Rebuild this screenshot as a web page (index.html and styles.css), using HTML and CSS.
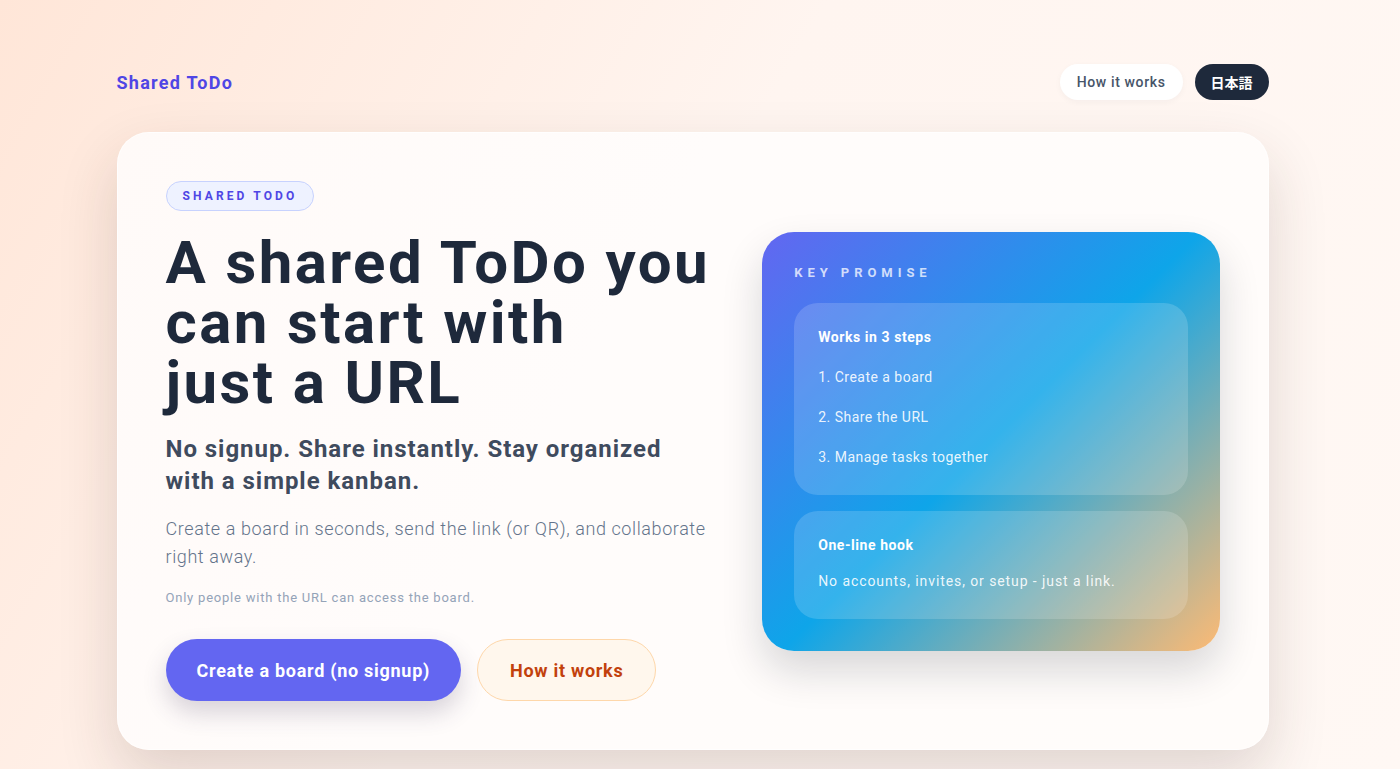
FILE: index.html
```html
<!DOCTYPE html>
<html lang="en">
<head>
    <meta charset="UTF-8">
    <meta name="viewport" content="width=device-width, initial-scale=1.0">
    <title>Shared ToDo</title>
    <link rel="stylesheet" href="styles.css">
</head>
<body>
    <div class="page">
        <header class="site-header">
            <a class="brand" href="#">Shared ToDo</a>
            <nav class="header-nav">
                <a class="nav-link" href="#how">How it works</a>
                <button class="lang-btn" type="button">日本語</button>
            </nav>
        </header>

        <main>
            <section class="hero-card">
                <div class="hero-copy">
                    <span class="eyebrow">SHARED TODO</span>
                    <h1>A shared ToDo you<br> can start with<br> just a URL</h1>
                    <p class="lead">No signup. Share instantly. Stay organized with a simple kanban.</p>
                    <p class="desc">Create a board in seconds, send the link (or QR), and collaborate right away.</p>
                    <p class="note">Only people with the URL can access the board.</p>
                    <div class="hero-actions">
                        <a class="btn btn-primary" href="#">Create a board (no signup)</a>
                        <a class="btn btn-secondary" href="#how">How it works</a>
                    </div>
                </div>

                <aside class="promise">
                    <p class="promise-label">KEY PROMISE</p>
                    <div class="promise-box">
                        <p class="promise-title">Works in 3 steps</p>
                        <ol class="promise-steps">
                            <li>1. Create a board</li>
                            <li>2. Share the URL</li>
                            <li>3. Manage tasks together</li>
                        </ol>
                    </div>
                    <div class="promise-box">
                        <p class="promise-title">One-line hook</p>
                        <p class="promise-text">No accounts, invites, or setup - just a link.</p>
                    </div>
                </aside>
            </section>

            <section class="section" id="how">
                <h2>How it works</h2>
                <div class="step-grid">
                    <div class="step-card">
                        <span class="step-num">1</span>
                        <h3>Create a board</h3>
                        <p>Press the button and a new board is ready. No account, no email.</p>
                    </div>
                    <div class="step-card">
                        <span class="step-num">2</span>
                        <h3>Share the URL</h3>
                        <p>Copy the link or show the QR code to the people you work with.</p>
                    </div>
                    <div class="step-card">
                        <span class="step-num">3</span>
                        <h3>Manage tasks together</h3>
                        <p>Add cards, move them between columns and see changes right away.</p>
                    </div>
                </div>
            </section>

            <section class="section">
                <h2>Why Shared ToDo</h2>
                <div class="step-grid">
                    <div class="step-card">
                        <h3>No signup</h3>
                        <p>Start in seconds. The URL is the key to your board.</p>
                    </div>
                    <div class="step-card">
                        <h3>Simple kanban</h3>
                        <p>Todo, Doing and Done. Nothing more than you need.</p>
                    </div>
                    <div class="step-card">
                        <h3>Works anywhere</h3>
                        <p>Open the board on a phone, a tablet or a laptop.</p>
                    </div>
                </div>
            </section>

            <section class="section">
                <h2>FAQ</h2>
                <div class="faq">
                    <div class="faq-item">
                        <h3>Who can see my board?</h3>
                        <p>Only people with the URL can access the board.</p>
                    </div>
                    <div class="faq-item">
                        <h3>Do I need an account?</h3>
                        <p>No. Create a board and share the link.</p>
                    </div>
                    <div class="faq-item">
                        <h3>Is it free?</h3>
                        <p>Yes, Shared ToDo is free to use.</p>
                    </div>
                </div>
            </section>
        </main>

        <footer class="site-footer">
            <p>&copy; 2024 Shared ToDo</p>
        </footer>
    </div>
</body>
</html>
```

FILE: styles.css
```css
* {
    box-sizing: border-box;
}

body {
    margin: 0;
    padding-right: 15px;
    font-family: 'Roboto', 'Noto Sans CJK JP', sans-serif;
    letter-spacing: 0.03em;
    color: #1e293b;
    background: linear-gradient(120deg, #ffe6d8 0%, #fff5f0 45%, #fff8f4 100%);
    background-attachment: fixed;
}

a {
    text-decoration: none;
}

p {
    margin: 0;
}

.page {
    max-width: 1152px;
    margin: 0 auto;
    padding: 64px 0 80px;
}

.site-header {
    display: flex;
    justify-content: space-between;
    align-items: center;
    height: 36px;
    margin-bottom: 32px;
}

.brand {
    color: #4f46e5;
    font-size: 18px;
    font-weight: 700;
    letter-spacing: 0.07em;
}

.header-nav {
    display: flex;
    gap: 12px;
}

.nav-link,
.lang-btn {
    display: inline-flex;
    align-items: center;
    height: 36px;
    padding: 0 17px;
    border-radius: 999px;
    font-family: inherit;
    font-size: 14px;
    font-weight: 500;
}

.nav-link {
    background: #fff;
    color: #475569;
    letter-spacing: 0.045em;
    box-shadow: 0 2px 6px rgba(15, 23, 42, 0.04);
}

.lang-btn {
    padding: 0 16px;
    background: #1e293b;
    color: #fff;
    border: none;
    font-weight: 700;
    letter-spacing: 0;
}

.hero-card {
    display: grid;
    grid-template-columns: 1.2fr 1fr;
    gap: 48px;
    align-items: center;
    padding: 48px;
    border: 1px solid rgba(255, 255, 255, 0.7);
    border-radius: 32px;
    background: linear-gradient(120deg, #fffaf8 0%, #fffcfb 40%, #fffcfa 100%);
    box-shadow: 0 26px 60px rgba(60, 40, 30, 0.16);
}

.eyebrow {
    display: inline-block;
    height: 30px;
    line-height: 28px;
    padding: 0 16px;
    border: 1px solid #c7d2fe;
    border-radius: 999px;
    background: #eef2ff;
    color: #4f46e5;
    font-size: 12px;
    font-weight: 700;
    letter-spacing: 0.26em;
}

h1 {
    margin: 22px 0 20px;
    font-size: 60px;
    line-height: 60px;
    font-weight: 700;
    letter-spacing: 0.04em;
    color: #1e293b;
}

.lead {
    max-width: 520px;
    font-size: 24px;
    line-height: 32px;
    font-weight: 700;
    letter-spacing: 0.04em;
    color: #3f4b5e;
}

.desc {
    margin-top: 18px;
    font-size: 18px;
    line-height: 28px;
    font-weight: 300;
    letter-spacing: 0.033em;
    color: #64748b;
}

.note {
    margin-top: 17px;
    font-size: 13px;
    line-height: 20px;
    letter-spacing: 0.06em;
    color: #94a3b8;
}

.hero-actions {
    display: flex;
    gap: 16px;
    margin-top: 31px;
}

.btn {
    display: inline-flex;
    align-items: center;
    height: 62px;
    padding: 0 31px;
    border-radius: 999px;
    font-size: 18px;
    font-weight: 700;
    letter-spacing: 0.04em;
}

.btn-primary {
    background: #6366f1;
    color: #fff;
    box-shadow: 0 12px 24px rgba(60, 50, 90, 0.2);
}

.btn-secondary {
    padding: 0 32px;
    background: #fff7ed;
    color: #c2410c;
    border: 1px solid #fed7aa;
}

.promise {
    padding: 31px 32px 32px;
    border-radius: 32px;
    color: #fff;
    background: linear-gradient(135deg, #6366f1 0%, #0ea5e9 50%, #fdba74 100%);
    box-shadow: 0 20px 40px rgba(15, 23, 42, 0.16);
}

.promise-label {
    font-size: 13px;
    line-height: 20px;
    font-weight: 700;
    letter-spacing: 0.38em;
    color: rgba(255, 255, 255, 0.75);
    margin-bottom: 20px;
}

.promise-box {
    padding: 22px 24px 26px;
    border-radius: 24px;
    background: rgba(255, 255, 255, 0.16);
}

.promise-box + .promise-box {
    margin-top: 16px;
}

.promise-title {
    font-size: 14px;
    line-height: 24px;
    font-weight: 700;
    letter-spacing: 0.04em;
}

.promise-steps {
    list-style: none;
    margin: 0;
    padding: 0;
}

.promise-steps li,
.promise-text {
    margin-top: 16px;
    font-size: 14px;
    line-height: 24px;
    color: rgba(255, 255, 255, 0.9);
}

.promise-text {
    margin-top: 12px;
    letter-spacing: 0.065em;
}

.section {
    margin-top: 96px;
    padding: 48px;
    border-radius: 32px;
    background: rgba(255, 255, 255, 0.8);
}

.section h2 {
    margin: 0 0 32px;
    font-size: 32px;
}

.step-grid {
    display: grid;
    grid-template-columns: repeat(3, 1fr);
    gap: 24px;
}

.step-card {
    min-height: 300px;
    padding: 28px;
    border-radius: 24px;
    background: #fff;
    box-shadow: 0 10px 24px rgba(15, 23, 42, 0.06);
}

.step-num {
    display: inline-flex;
    justify-content: center;
    align-items: center;
    width: 36px;
    height: 36px;
    border-radius: 50%;
    background: #eef2ff;
    color: #4f46e5;
    font-weight: 700;
}

.step-card h3,
.faq-item h3 {
    margin: 16px 0 8px;
    font-size: 18px;
}

.step-card p,
.faq-item p {
    color: #64748b;
    line-height: 1.6;
}

.faq {
    display: flex;
    flex-direction: column;
    gap: 16px;
}

.faq-item {
    padding: 12px 24px 24px;
    border-radius: 20px;
    background: #fff;
}

.site-footer {
    margin-top: 80px;
    padding-bottom: 160px;
    text-align: center;
    color: #94a3b8;
    font-size: 13px;
}
```
